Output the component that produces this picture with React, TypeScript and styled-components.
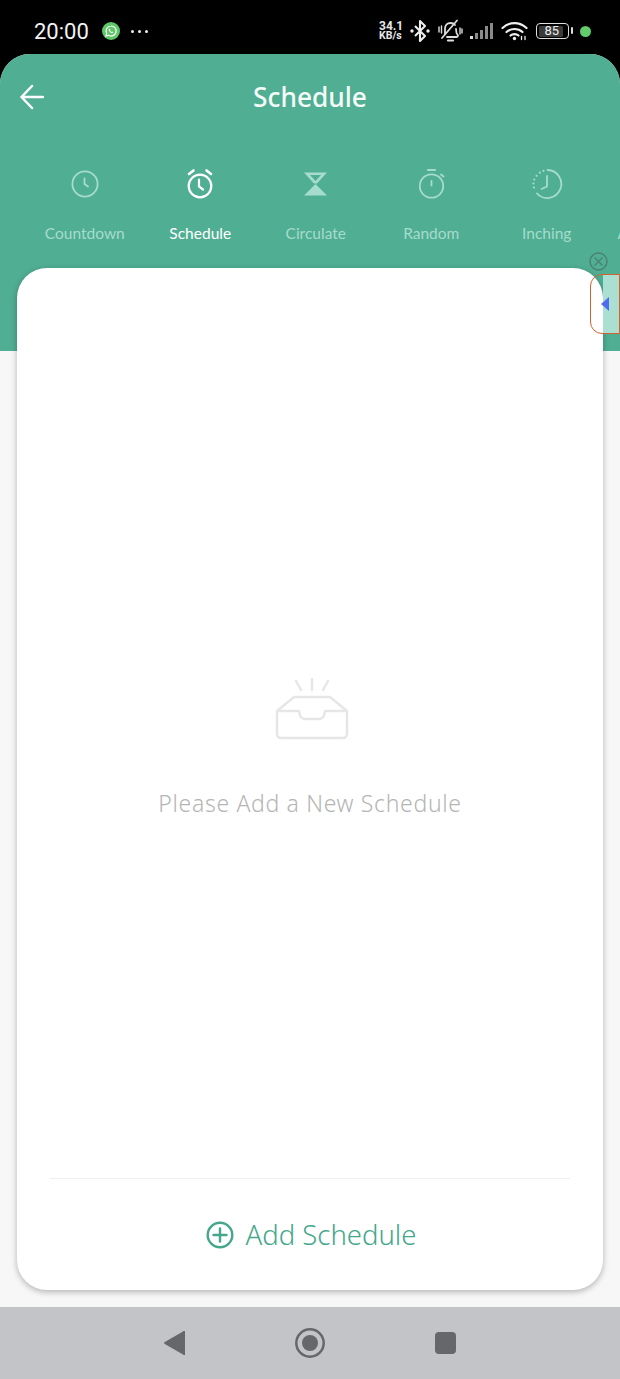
import React from "react";
import styled, { createGlobalStyle } from "styled-components";

const Global = createGlobalStyle`
  html, body { margin: 0; padding: 0; background: #000; }
  * { box-sizing: border-box; }
`;

const Page = styled.div`
  position: relative;
  width: 620px;
  height: 1379px;
  overflow: hidden;
  display: flex;
  flex-direction: column;
  background: #000;
  font-family: "Lato", "Liberation Sans", sans-serif;
`;

const StatusBar = styled.div`
  height: 54px;
  flex: none;
  display: flex;
  align-items: center;
  padding: 8px 29px 0 34px;
  color: #f2f2f2;
`;
const Time = styled.span`
  font-family: "Roboto", sans-serif;
  font-size: 22px;
  font-weight: 400;
  width: 68px;
`;
const Dots = styled.div`
  display: flex;
  gap: 4px;
  margin-left: 11px;
  span { width: 3px; height: 3px; border-radius: 50%; background: #eee; }
`;
const Spacer = styled.div`
  flex: 1;
`;
const Speed = styled.div`
  font-family: "Roboto", sans-serif;
  font-weight: 700;
  font-size: 10.5px;
  line-height: 9.5px;
  width: 25px;
  color: #e8e8e8;
  white-space: nowrap;
  b { display: block; font-size: 12px; font-weight: 700; }
`;
const Battery = styled.div`
  position: relative;
  width: 33px;
  height: 16px;
  border: 1.5px solid #dedede;
  border-radius: 4px;
  padding: 1.5px;
  margin-left: 8px;
  &::after {
    content: "";
    position: absolute;
    right: -5px;
    top: 3px;
    width: 2px;
    height: 7px;
    background: #ddd;
    border-radius: 1px;
  }
`;
const BatteryFill = styled.div`
  width: 86%;
  height: 100%;
  background: #3a3a3a;
  border-radius: 1.5px;
  font-family: "Roboto", sans-serif;
  font-size: 13px;
  line-height: 10px;
  color: #eee;
  padding-left: 6px;
`;
const GreenDot = styled.div`
  width: 11px;
  height: 11px;
  border-radius: 50%;
  background: #62cb6b;
  margin-left: 11px;
`;

const Screen = styled.div`
  flex: 1;
  display: flex;
  flex-direction: column;
  background: #f7f7f7;
  border-radius: 30px 30px 0 0;
  overflow: hidden;
`;
const Header = styled.div`
  height: 297px;
  flex: none;
  background: #50ae93;
`;
const TitleRow = styled.div`
  position: relative;
  height: 86px;
  display: flex;
  align-items: center;
  justify-content: center;
`;
const BackButton = styled.div`
  position: absolute;
  left: 20px;
  top: 30px;
  display: flex;
`;
const Title = styled.h1`
  margin: 0;
  font-size: 26.3px;
  font-weight: 500;
  font-family: "Noto Sans", sans-serif;
  color: #f4fbf8;
`;
const Tabs = styled.div`
  display: flex;
  padding-left: 27px;
  margin-top: 26px;
  width: 800px;
`;
const Tab = styled.div<{ $active?: boolean }>`
  width: 115.5px;
  flex: none;
  display: flex;
  flex-direction: column;
  align-items: center;
  color: ${(p) => (p.$active ? "#ffffff" : "#a6dccb")};
  font-size: 15.5px;
  white-space: nowrap;
`;
const TabIcon = styled.div`
  height: 36px;
  display: flex;
  align-items: center;
  justify-content: center;
`;
const TabLabel = styled.span`
  margin-top: 21px;
  line-height: 20px;
`;

const Card = styled.div`
  flex: none;
  margin: -83px 17px 17px;
  height: 1022px;
  background: #fff;
  border-radius: 30px;
  box-shadow: 0 2px 6px rgba(0, 0, 0, 0.28);
  display: flex;
  flex-direction: column;
  position: relative;
`;
const Empty = styled.div`
  flex: 1;
  display: flex;
  flex-direction: column;
  align-items: center;
  padding-top: 410px;
`;
const EmptyIcon = styled.svg`
  margin-left: 3px;
`;
const EmptyText = styled.p`
  margin: 47px 0 0;
  font-size: 23px;
  line-height: 32px;
  letter-spacing: 0.67px;
  color: #b5b5b5;
  font-family: "Noto Sans", sans-serif;
  font-weight: 300;
`;
const CardFooter = styled.div`
  margin: 0 33px;
  height: 112px;
  border-top: 1px solid #f0f0f0;
  display: flex;
  align-items: center;
  justify-content: center;
  gap: 12px;
  padding-left: 2px;
`;
const AddText = styled.span`
  font-family: "Noto Sans", sans-serif;
  font-size: 27.5px;
  font-weight: 300;
  color: #44a78b;
`;

const NavBar = styled.div`
  flex: none;
  height: 72px;
  background: #c3c4c8;
  display: flex;
  align-items: center;
  justify-content: center;
  gap: 110px;
`;
const FloatClose = styled.div`
  position: absolute;
  left: 589px;
  top: 252px;
  display: flex;
`;
const FloatTab = styled.div`
  position: absolute;
  left: 590px;
  top: 274px;
  width: 30px;
  height: 60px;
  border: 1.5px solid #d2622f;
  border-radius: 12px 0 0 12px;
  display: flex;
  align-items: center;
  overflow: hidden;
`;
const FloatFill = styled.div`
  position: absolute;
  left: 11.5px;
  top: 0;
  bottom: 0;
  right: 0;
  background: #abdfd2;
`;
const FloatArrow = styled.div`
  position: relative;
  margin-left: 9.5px;
  width: 0;
  height: 0;
  border-top: 7px solid transparent;
  border-bottom: 7px solid transparent;
  border-right: 8px solid #4f6cf0;
`;

const Clock = () => (
  <svg width="30" height="30" viewBox="0 0 30 30" fill="none" stroke="#a6dccb" strokeWidth="1.8" strokeLinecap="round">
    <circle cx="15" cy="15" r="12.600" />
    <path d="M14.500 9.500v5.500l3.500 2.500" />
  </svg>
);
const Alarm = () => (
  <svg width="30" height="32" viewBox="0 0 30 32" fill="none" stroke="#fff" strokeWidth="2.2" strokeLinecap="round">
    <circle cx="15" cy="18" r="11.300" />
    <path d="M14 11.500v7l4 3" />
    <path d="M4 6l4.500-3.500M26 6l-4.500-3.500" strokeWidth="2.600" />
  </svg>
);
const Hourglass = () => (
  <svg width="23" height="24" viewBox="0 0 23 24">
    <path d="M0 .5h23L13 11.500h-3z" fill="#a6dccb" />
    <path d="M6 3h11l-5.500 6z" fill="#50ae93" />
    <path d="M11.500 12L23 23.500H0z" fill="#a6dccb" />
  </svg>
);
const Stopwatch = () => (
  <svg width="30" height="32" viewBox="0 0 30 32" fill="none" stroke="#a6dccb" strokeWidth="1.8" strokeLinecap="round">
    <circle cx="15.500" cy="18" r="11.700" />
    <path d="M15.500 13v4.500" />
    <path d="M12 2h7" strokeWidth="2.200" />
    <path d="M25 6.500l2.500 2" />
  </svg>
);
const Inching = () => (
  <svg width="32" height="32" viewBox="0 0 32 32" fill="none" stroke="#a6dccb" strokeWidth="1.8" strokeLinecap="round">
    <path d="M16.500 2a14 14 0 1 1-10.500 23.500" />
    <path d="M16 8v10.500l-5.500 2.500" />
    <path d="M12.500 2.800v0M8.800 4.700v0M5.600 7.800v0M3.300 11.500v0M2.400 15.500v0M3 19.500v0" strokeWidth="2.200" />
  </svg>
);

const tabs = [
  { label: "Countdown", icon: <Clock /> },
  { label: "Schedule", icon: <Alarm />, active: true },
  { label: "Circulate", icon: <Hourglass /> },
  { label: "Random", icon: <Stopwatch /> },
  { label: "Inching", icon: <Inching /> },
  { label: "Astronomical", icon: <Clock /> },
];

const StatusIcon = styled.svg<{ $gap: number }>`
  margin-left: ${(p) => p.$gap}px;
  flex: none;
`;

export default function App() {
  return (
    <Page>
      <Global />
      <StatusBar>
        <Time>20:00</Time>
        <StatusIcon $gap={0} width="18" height="18" viewBox="0 0 18 18">
          <circle cx="9" cy="9" r="9" fill="#5fc866" />
          <path d="M9 4a5 5 0 0 0-4.300 7.500L4 14l2.600-.7A5 5 0 1 0 9 4z" fill="none" stroke="#fff" strokeWidth="1.200" />
          <path d="M7 6.800c-.6.500-.5 1.400.3 2.500s1.800 1.800 2.700 1.800c.7 0 1.200-.6 1.200-1.100l-1.200-.6-.5.500c-.6-.2-1.200-.8-1.500-1.500l.4-.5-.5-1.200z" fill="#fff" />
        </StatusIcon>
        <Dots>
          <span />
          <span />
          <span />
        </Dots>
        <Spacer />
        <Speed>
          <b>34.1</b>KB/s
        </Speed>
        <StatusIcon $gap={6} width="20" height="24" viewBox="0 0 20 24" fill="none" stroke="#eee" strokeWidth="2.100">
          <path d="M5 7l10 10-5 5V2l5 5L5 17" strokeLinejoin="round" />
          <circle cx="2" cy="12" r="1.700" fill="#eee" stroke="none" />
          <circle cx="18" cy="12" r="1.700" fill="#eee" stroke="none" />
        </StatusIcon>
        <StatusIcon $gap={8} width="25" height="24" viewBox="0 0 25 24" fill="none" stroke="#ddd" strokeWidth="1.800" strokeLinecap="round">
          <path d="M7 15V10c0-4 2.500-6 5.500-6 2 0 3.500.8 4.500 2M18 10c0 3 .5 5 2 6.500 0 .8-.5 1.500-1.500 1.500H9" />
          <path d="M10 21.500h5" strokeWidth="2.200" />
          <path d="M19 1.500L4 19" />
          <path d="M1 8v5M3.500 7v7M22 9v6M24 10v4" strokeWidth="1.400" />
        </StatusIcon>
        <StatusIcon $gap={6} width="26" height="20" viewBox="0 0 26 20" fill="#8a8a8a">
          <rect x="1" y="15" width="3" height="3" fill="#ddd" />
          <rect x="6" y="12" width="3" height="6" />
          <rect x="11" y="9" width="3" height="9" />
          <rect x="16" y="5" width="3" height="13" />
          <rect x="21" y="2" width="3" height="16" />
        </StatusIcon>
        <StatusIcon $gap={6} width="27" height="20" viewBox="0 0 27 20" fill="none" stroke="#f0f0f0" strokeWidth="2.200" strokeLinecap="round">
          <path d="M1.500 7c7-6.500 17-6.500 24 0" />
          <path d="M5.500 11c4.500-4 11.500-4 16 0" />
          <path d="M9.500 14.500c2-1.800 6-1.800 8 0" />
          <circle cx="13.500" cy="17.500" r="1.700" fill="#f0f0f0" stroke="none" />
          <path d="M20.500 15.500v3M24 15.500v3" strokeWidth="1.300" />
        </StatusIcon>
        <Battery>
          <BatteryFill>85</BatteryFill>
        </Battery>
        <GreenDot />
      </StatusBar>
      <Screen>
        <Header>
          <TitleRow>
            <BackButton>
              <svg width="24" height="26" viewBox="0 0 24 26" fill="none" stroke="#fff" strokeWidth="2.500" strokeLinecap="round" strokeLinejoin="round">
                <path d="M23 13H1.500M12 2L1.500 13 12 24" />
              </svg>
            </BackButton>
            <Title>Schedule</Title>
          </TitleRow>
          <Tabs>
            {tabs.map((t) => (
              <Tab key={t.label} $active={t.active}>
                <TabIcon>{t.icon}</TabIcon>
                <TabLabel>{t.label}</TabLabel>
              </Tab>
            ))}
          </Tabs>
        </Header>
        <Card>
          <Empty>
            <EmptyIcon width="74" height="62" viewBox="0 0 74 62" fill="none" stroke="#e6e6e6" strokeWidth="2.400" strokeLinecap="round" strokeLinejoin="round">
              <path d="M21 3l5 9M37 1v11M53 3l-5 9" />
              <path d="M2 33l17-14h36l17 14v23a4 4 0 0 1-4 4H6a4 4 0 0 1-4-4z" />
              <path d="M2 33h21c1 0 1.500.6 1.500 1.500V36a6 6 0 0 0 6 5h13a6 6 0 0 0 6-5v-1.500c0-.9.500-1.500 1.500-1.500h21" />
            </EmptyIcon>
            <EmptyText>Please Add a New Schedule</EmptyText>
          </Empty>
          <CardFooter>
            <svg width="28" height="28" viewBox="0 0 28 28" fill="none" stroke="#44a78b" strokeWidth="2.400" strokeLinecap="round">
              <circle cx="14" cy="14" r="12.300" />
              <path d="M14 7.500v13M7.500 14h13" />
            </svg>
            <AddText>Add Schedule</AddText>
          </CardFooter>
        </Card>
      </Screen>
      <NavBar>
        <svg width="21" height="24" viewBox="0 0 21 24">
          <path d="M19 .5a1 1 0 0 1 2 .8v21.400a1 1 0 0 1-2 .8L.8 13a1.200 1.200 0 0 1 0-2z" fill="#66676b" />
        </svg>
        <svg width="30" height="30" viewBox="0 0 30 30" fill="none">
          <circle cx="15" cy="15" r="13.700" stroke="#66676b" strokeWidth="2.500" />
          <circle cx="15" cy="15" r="8" fill="#66676b" />
        </svg>
        <svg width="21" height="22" viewBox="0 0 21 22">
          <rect width="21" height="22" rx="4" fill="#66676b" />
        </svg>
      </NavBar>
      <FloatClose>
        <svg width="19" height="19" viewBox="0 0 19 19" fill="none" stroke="#4d7f72" strokeWidth="1.400" strokeLinecap="round">
          <circle cx="9.500" cy="9.500" r="8.500" />
          <path d="M6 6l7 7M13 6l-7 7" />
        </svg>
      </FloatClose>
      <FloatTab>
        <FloatFill />
        <FloatArrow />
      </FloatTab>
    </Page>
  );
}
